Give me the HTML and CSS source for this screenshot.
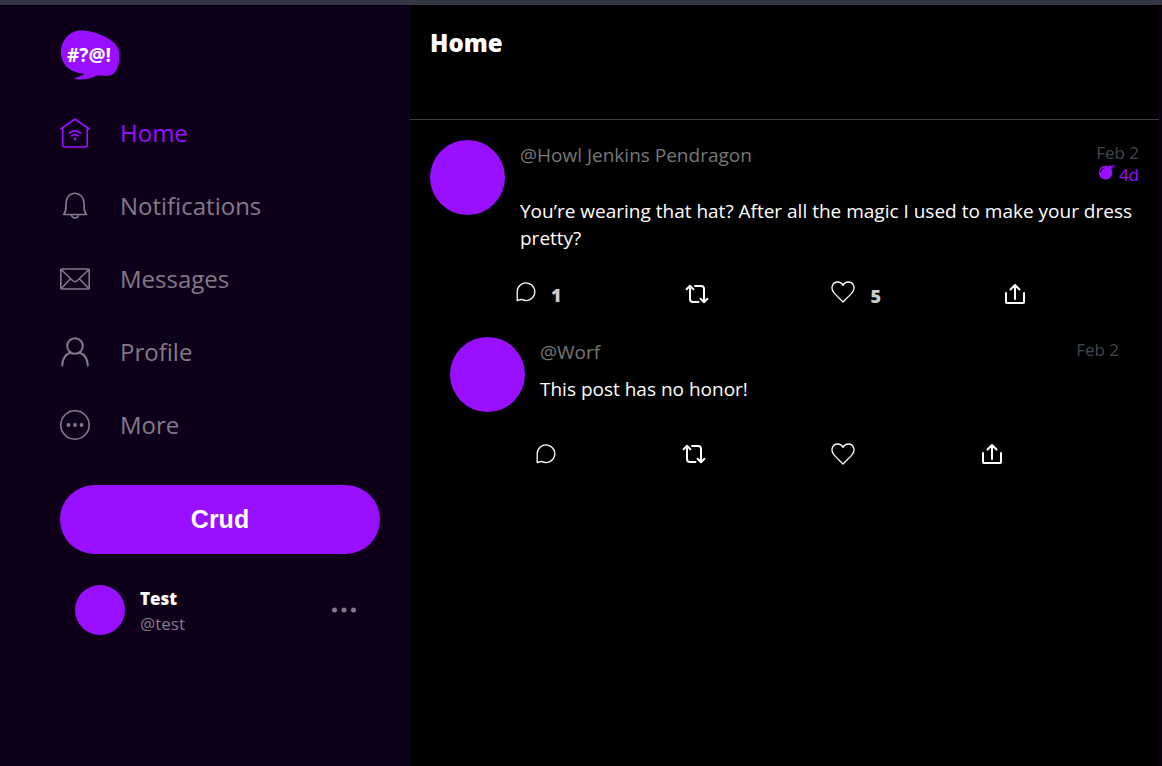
FILE: index.html
```html
<!DOCTYPE html>
<html lang="en">
<head>
<meta charset="utf-8">
<meta name="viewport" content="width=device-width, initial-scale=1">
<title>Home</title>
<link rel="stylesheet" href="styles.css">
</head>
<body>
<svg class="sprite" aria-hidden="true">
  <symbol id="comment" viewBox="0 0 20 20"><path d="M1.2 18.6V9.600a8.800 8.800 0 1 1 5 8.100c-1.600-.8-2.800.6-5 .9z"/></symbol>
  <symbol id="repost" viewBox="0 0 24 20"><path d="M1.600 5.200 5 1.800l3.400 3.400M5 2v13q0 3 3 3h5.500M10 2h6q3 0 3 3v12.500M15.600 14.800l3.400 3.400 3.400-3.400"/></symbol>
  <symbol id="heart" viewBox="0 0 24 22"><path d="M12 21 3.400 12.400C-1.600 7 2 1 6.500 1 9 1 11 2.400 12 4.400 13 2.400 15 1 17.500 1 22 1 25.600 7 20.600 12.400z"/></symbol>
  <symbol id="share" viewBox="0 0 22 22"><path d="M2 10v9.200q0 .8.800.8h16.400q.8 0 .8-.8V10M11 16V2.500M6.500 6.500 11 2l4.500 4.500"/></symbol>
</svg>
<div class="app">
  <aside class="sidebar">
    <a class="logo" href="#" aria-label="Home page">
      <svg viewBox="0 0 60 50" width="60" height="50" aria-hidden="true">
        <path class="logo-bubble" d="M21 .5C34 .5 57 9 59 21c1.500 8-.5 19-6 23-4 2.500-9 1.600-16 1.600C31 49 22 50.500 13.500 48.500 18 47.500 22 46 24.500 43.800 11 43 2 36 1 24 .3 11 9 .5 21 .5z"/>
        <text class="logo-text" x="29" y="32" text-anchor="middle">#?@!</text>
      </svg>
    </a>
    <nav class="nav">
      <a class="nav-link active" href="#">
        <svg class="nav-icon" viewBox="0 0 30 30"><path d="M.8 11 15 1l14.200 10M2.800 10v17.500q0 1.500 1.500 1.500h21.400q1.500 0 1.500-1.500V10"/><path d="M9.500 15q5.500-4.300 11 0M11.700 17.800q3.300-2.400 6.600 0"/><circle class="dot" cx="15" cy="21" r="1.400"/></svg>
        <span>Home</span></a>
      <a class="nav-link" href="#">
        <svg class="nav-icon" viewBox="0 0 30 30"><path d="M3.600 23.500c2.500-3 2.400-5.500 2.400-11.500a9 9.800 0 0 1 18 0c0 6-.1 8.500 2.400 11.500zM11.500 24c.5 4 6.500 4 7 0"/></svg>
        <span>Notifications</span></a>
      <a class="nav-link" href="#">
        <svg class="nav-icon" viewBox="0 0 30 30"><rect x=".8" y="5" width="28.400" height="20" rx="1.500"/><path d="M1.200 5.500 12.500 16.500q2.500 2.200 5 0L28.800 5.500M1.200 24.500l9.300-9.500M28.800 24.500 19.500 15"/></svg>
        <span>Messages</span></a>
      <a class="nav-link" href="#">
        <svg class="nav-icon thick" viewBox="0 0 30 30"><circle cx="15" cy="9" r="7.800"/><path d="M2.200 28.500C2.500 22 6 17.200 10.500 15.500M27.800 28.500C27.500 22 24 17.200 19.500 15.500"/></svg>
        <span>Profile</span></a>
      <a class="nav-link" href="#">
        <svg class="nav-icon" viewBox="0 0 30 30"><circle cx="15" cy="15" r="14.200"/><circle class="dot" cx="8.500" cy="15" r="1.900"/><circle class="dot" cx="15" cy="15" r="1.900"/><circle class="dot" cx="21.500" cy="15" r="1.900"/></svg>
        <span>More</span></a>
    </nav>
    <button class="crud-button" type="button">Crud</button>
    <div class="account">
      <span class="avatar avatar-small"></span>
      <div class="account-text"><strong>Test</strong><span>@test</span></div>
      <button class="dots" type="button" aria-label="Account options"><svg viewBox="0 0 24 6" width="24" height="6"><circle cx="2.500" cy="3" r="2.500"/><circle cx="12" cy="3" r="2.500"/><circle cx="21.500" cy="3" r="2.500"/></svg></button>
    </div>
  </aside>
  <main class="feed">
    <header class="feed-header"><h1>Home</h1></header>
    <article class="post">
      <span class="avatar"></span>
      <div class="content">
        <div class="post-header">
          <a class="author" href="#">@Howl Jenkins Pendragon</a>
          <div class="meta"><time>Feb 2</time>
            <span class="fuse"><svg viewBox="0 0 17 17" width="17" height="17" aria-hidden="true"><path class="bomb" d="M13.300 4.900a6.800 6.800 0 1 1-3-2.500l1.500-1.400 2.500 2.500z"/><path class="spark" d="M13 2.500q1-2 2-.8t2-.2M14.500 3l1.500 1"/><path class="shine" d="M2.300 8Q2.800 4.600 6 4"/></svg><span>4d</span></span></div>
        </div>
        <p class="body">You’re wearing that hat? After all the magic I used to make your dress pretty?</p>
      </div>
      <div class="actions">
        <button type="button" aria-label="Reply"><svg class="thin" width="20" height="20"><use href="#comment"/></svg><span>1</span></button>
        <button type="button" aria-label="Repost"><svg width="24" height="20"><use href="#repost"/></svg></button>
        <button type="button" aria-label="Like"><svg class="thin" width="24" height="22"><use href="#heart"/></svg><span>5</span></button>
        <button type="button" aria-label="Share"><svg width="22" height="22"><use href="#share"/></svg></button>
      </div>
    </article>
    <article class="post reply">
      <span class="avatar"></span>
      <div class="content">
        <div class="post-header">
          <a class="author" href="#">@Worf</a>
          <div class="meta"><time>Feb 2</time></div>
        </div>
        <p class="body">This post has no honor!</p>
      </div>
      <div class="actions">
        <button type="button" aria-label="Reply"><svg class="thin" width="20" height="20"><use href="#comment"/></svg></button>
        <button type="button" aria-label="Repost"><svg width="24" height="20"><use href="#repost"/></svg></button>
        <button type="button" aria-label="Like"><svg class="thin" width="24" height="22"><use href="#heart"/></svg></button>
        <button type="button" aria-label="Share"><svg width="22" height="22"><use href="#share"/></svg></button>
      </div>
    </article>
  </main>
</div>
</body>
</html>
```
FILE: styles.css
```css
* { box-sizing: border-box; }
body {
  margin: 0;
  background: #0f0019;
  color: #fff;
  font-family: "Open Sans", "Noto Sans", sans-serif;
  font-size: 19px;
}
a { color: inherit; text-decoration: none; }
button { border: 0; padding: 0; background: none; color: inherit; cursor: pointer; }
svg { display: block; fill: none; stroke: currentColor; stroke-linecap: round; stroke-linejoin: round; }
.sprite { display: none; }
.app {
  display: grid;
  grid-template-columns: 410px 1fr;
  min-height: 100vh;
  padding-right: 3px;
  border-top: 5px solid #323645;
}
.sidebar { padding: 25px 30px 0 60px; color: #84798a; }
.logo { display: block; width: 60px; margin-bottom: 16px; }
.logo-bubble { fill: #990fff; stroke: none; }
.logo-text { fill: #fff; stroke: none; font: bold 19px "Open Sans", sans-serif; }
.nav { display: flex; flex-direction: column; }
.nav-link { display: flex; align-items: center; gap: 30px; height: 73px; font-size: 24px; }
.nav-icon { width: 30px; height: 30px; stroke-width: 1.6; }
.nav-icon.thick { stroke-width: 2; }
.dot { fill: currentColor; stroke: none; }
.active { color: #990fff; }
.active span { font-weight: 500; }
.crud-button {
  width: 100%;
  height: 69px;
  margin-top: 24px;
  border-radius: 35px;
  background: #990fff;
  color: #fff;
  font: bold 25px "Liberation Sans", Arial, sans-serif;
}
.account { display: flex; align-items: center; gap: 15px; margin-top: 30px; padding: 0 24px 0 15px; }
.avatar { width: 75px; height: 75px; border-radius: 50%; background: #990fff; }
.avatar-small { width: 50px; height: 50px; }
.account-text { display: flex; flex: 1; flex-direction: column; padding-top: 2px; font-size: 17px; line-height: 25px; }
.account-text strong { color: #fff; font-weight: 800; }
.dots svg { fill: currentColor; stroke: none; }
.dots { color: #84798a; }
.feed { min-width: 0; background: #000; }
.feed-header { height: 115px; padding: 20px; border-bottom: 1px solid #3d3f48; }
h1 { margin: 0; font-size: 24px; font-weight: 800; line-height: 36px; }
.post { display: grid; grid-template-columns: 75px 1fr; column-gap: 15px; padding: 20px 20px 0; }
.reply { padding: 28px 40px 0; }
.content { min-height: 75px; }
.post-header { display: flex; justify-content: space-between; }
.author { color: #777; line-height: 30px; }
.meta { padding: 2px 0 3px; color: #454552; font-size: 17px; line-height: 22px; text-align: right; }
.fuse { display: flex; justify-content: flex-end; gap: 4px; color: #990fff; }
.bomb { fill: currentColor; stroke: none; }
.spark { stroke-width: 1; }
.shine { stroke: #000; stroke-width: 1; }
.body { margin: 9px 0 0; line-height: 27px; }
.actions {
  display: flex;
  grid-column: 2;
  align-items: center;
  justify-content: space-between;
  height: 28px;
  margin: 28px 113px 0 -4px;
}
.post:not(.reply) .actions { margin-bottom: 1px; }
.reply .actions { margin-right: 116px; }
.actions button { display: flex; align-items: baseline; gap: 15px; }
.actions svg { stroke-width: 2; }
.actions .thin { stroke-width: 1.3; }
.actions span { color: #ccc; font: 800 18px "Open Sans", sans-serif; }
```
